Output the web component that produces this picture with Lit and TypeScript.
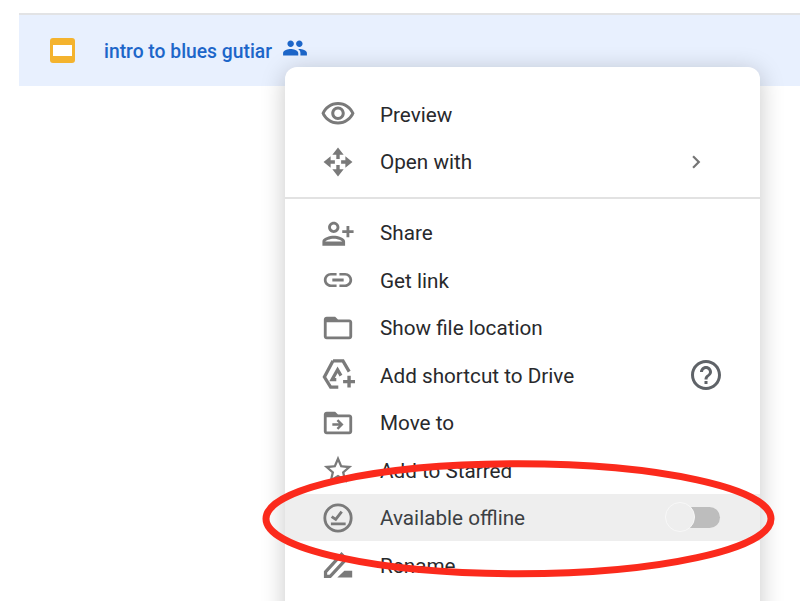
import { LitElement, html, css, svg } from "lit";
import { customElement } from "lit/decorators.js";

const P = (d: string) => svg`<path d=${d}></path>`;
const icons: Record<string, unknown> = {
  eye: svg`<g transform="translate(12 11.5) scale(1.06) translate(-12 -11.5)"><path d="M12 6c3.79 0 7.17 2.13 8.82 5.5C19.17 14.87 15.79 17 12 17s-7.17-2.13-8.82-5.5C4.83 8.13 8.21 6 12 6m0-2C7 4 2.73 7.11 1 11.5 2.73 15.89 7 19 12 19s9.27-3.11 11-7.5C21.27 7.11 17 4 12 4zm0 5c1.38 0 2.5 1.12 2.5 2.5S13.38 14 12 14s-2.5-1.12-2.5-2.5S10.62 9 12 9m0-2c-2.48 0-4.5 2.02-4.5 4.5S9.52 16 12 16s4.5-2.02 4.5-4.5S14.48 7 12 7z"></path></g>`,
  move: P("M12 1.800L8 6.800h2.800v3h2.400v-3H16zM1.800 12l5 4v-2.800h3v-2.400h-3V8zM22.200 12l-5-4v2.800h-3v2.400h3V16zM12 22.200l4-5h-2.800v-3h-2.400v3H8z"),
  share: svg`<g transform="translate(24 0) scale(-1 1)"><path d="M15 12c2.21 0 4-1.79 4-4s-1.79-4-4-4-4 1.79-4 4 1.79 4 4 4zm0-6c1.1 0 2 .9 2 2s-.9 2-2 2-2-.9-2-2 .9-2 2-2zm0 8c-2.67 0-8 1.34-8 4v3h16v-3c0-2.66-5.33-4-8-4zm-6 4c.22-.72 3.31-2 6-2 2.7 0 5.8 1.29 6 2H9zm-3-3v-3h3v-2H6V7H4v3H1v2h3v3h2z"></path></g>`,
  link: P("M3.900 12c0-1.710 1.390-3.100 3.100-3.100h4V7H7c-2.760 0-5 2.240-5 5s2.240 5 5 5h4v-1.900H7c-1.710 0-3.100-1.390-3.100-3.100zM8 13h8v-2H8v2zm9-6h-4v1.900h4c1.710 0 3.100 1.390 3.100 3.100s-1.390 3.100-3.100 3.100h-4V17h4c2.760 0 5-2.240 5-5s-2.240-5-5-5z"),
  folder: P("M20 6h-8l-2-2H4c-1.100 0-1.990.9-1.990 2L2 18c0 1.100.9 2 2 2h16c1.100 0 2-.9 2-2V8c0-1.100-.9-2-2-2zm0 12H4V8h16v10z"),
  shortcut: svg`<path class="line thick" d="M8.500 2h7l4.400 7.600M8.500 2L2.400 13.400 6.800 20.500h5.400M10.800 15.300H7.800l3.900-7 2.400 4.100"></path><path d="M18.600 12.500h2.400v3h3v2.400h-3v3h-2.400v-3h-3v-2.400h3z"></path>`,
  moveto: P("M20 6h-8l-2-2H4c-1.100 0-1.990.9-1.990 2L2 18c0 1.100.9 2 2 2h16c1.100 0 2-.9 2-2V8c0-1.100-.9-2-2-2zm0 12H4V8h16v10zm-7.800-1.300l3.700-3.700-3.700-3.700-1.200 1.200 1.600 1.600H8v1.800h4.600L11 15.500z"),
  star: P("M22 9.240l-7.190-.62L12 2 9.190 8.630 2 9.240l5.460 4.730L5.820 21 12 17.270 18.180 21l-1.630-7.030L22 9.240zM12 15.400l-3.760 2.270 1-4.280-3.320-2.880 4.380-.38L12 6.100l1.710 4.040 4.380.38-3.320 2.880 1 4.280L12 15.400z"),
  offline: svg`<circle class="line" cx="12" cy="12" r="9.300"></circle><path class="line" d="M7.500 11l2.900 2 4.200-5.500M7 16.200h10.400"></path>`,
  rename: svg`<path class="line thick" d="M3.200 20v-3.200L14.500 4.500l3.300 3.300L6.500 20z"></path><path d="M11.500 20.800L16.500 16H22v4.800z"></path>`,
};
const help = "M11 18h2v-2h-2v2zm1-16C6.480 2 2 6.480 2 12s4.480 10 10 10 10-4.480 10-10S17.520 2 12 2zm0 18c-4.410 0-8-3.590-8-8s3.590-8 8-8 8 3.590 8 8-3.590 8-8 8zm0-14c-2.210 0-4 1.790-4 4h2c0-1.100.9-2 2-2s2 .9 2 2c0 2-3 1.750-3 5h2c0-2.250 3-2.500 3-5 0-2.210-1.790-4-4-4z";
const people = "M16 11c1.660 0 2.990-1.340 2.990-3S17.660 5 16 5c-1.660 0-3 1.340-3 3s1.340 3 3 3zm-8 0c1.660 0 2.990-1.340 2.990-3S9.660 5 8 5C6.340 5 5 6.340 5 8s1.340 3 3 3zm0 2c-2.330 0-7 1.170-7 3.500V19h14v-2.500c0-2.330-4.670-3.500-7-3.500zm8 0c-.29 0-.62.02-.97.05 1.160.84 1.970 1.970 1.970 3.450V19h6v-2.500c0-2.330-4.670-3.500-7-3.500z";

type Item = { icon: string; label: string; kind?: "chevron" | "help" | "toggle" };
const first: Item[] = [
  { icon: "eye", label: "Preview" },
  { icon: "move", label: "Open with", kind: "chevron" },
];
const second: Item[] = [
  { icon: "share", label: "Share" },
  { icon: "link", label: "Get link" },
  { icon: "folder", label: "Show file location" },
  { icon: "shortcut", label: "Add shortcut to Drive", kind: "help" },
  { icon: "moveto", label: "Move to" },
  { icon: "star", label: "Add to Starred" },
  { icon: "offline", label: "Available offline", kind: "toggle" },
  { icon: "rename", label: "Rename" },
];

@customElement("app-root")
export class AppRoot extends LitElement {
  static styles = css`
    :host {
      display: block;
      position: relative;
      width: 800px;
      height: 601px;
      overflow: hidden;
      background: #fff;
      padding-top: 13px;
      box-sizing: border-box;
      font-family: Roboto, "Liberation Sans", sans-serif;
    }
    .row {
      margin-left: 19px;
      height: 71px;
      border-top: 2px solid #e2e3e5;
      background: #e8f0fe;
      display: flex;
      align-items: center;
      padding: 0 0 0 31px;
      color: #1d66c9;
      box-sizing: content-box;
    }
    .slides {
      width: 25px;
      height: 25px;
      border-radius: 3px;
      background: #f4b32e;
      display: flex;
      align-items: center;
      justify-content: center;
      margin-right: 29px;
    }
    .slides i {
      display: block;
      width: 19px;
      height: 11px;
      background: #fff;
    }
    .title {
      font-size: 19.3px;
      font-weight: 500;
      margin-right: 10px;
      padding-top: 2px;
    }
    .people {
      width: 26px;
      height: 26px;
      fill: #1d66c9;
      margin-bottom: 5px;
    }
    .menu {
      position: absolute;
      left: 285px;
      top: 67px;
      width: 475px;
      height: 600px;
      background: #fff;
      border-radius: 12px 12px 0 0;
      box-shadow: 0 4px 24px rgba(0, 0, 0, 0.22);
      padding-top: 23.25px;
      box-sizing: border-box;
    }
    .item {
      height: 47.5px;
      display: flex;
      align-items: center;
      padding-left: 36px;
      padding-right: 40px;
      font-size: 20.7px;
      color: #28292c;
    }
    .item.active {
      background: #eeeeee;
      color: #3c4043;
    }
    .icon {
      width: 34px;
      height: 34px;
      fill: #7a7a7a;
      flex: none;
      margin-right: 25px;
    }
    .icon .line {
      fill: none;
      stroke: #7a7a7a;
      stroke-width: 2;
    }
    .icon .line.thick {
      stroke-width: 2.3;
    }
    .label {
      flex: 1;
      padding-top: 1px;
    }
    .sep {
      height: 2px;
      background: #e2e2e2;
      margin: 11.5px 0 10px;
    }
    .chevron {
      width: 26px;
      height: 26px;
      fill: #757575;
      margin-right: 11px;
    }
    .help {
      width: 36px;
      height: 36px;
      fill: #5f6368;
      margin-right: -4px;
    }
    .toggle {
      position: relative;
      width: 40px;
      height: 21px;
      border-radius: 11px;
      background: #bdbdbd;
    }
    .thumb {
      position: absolute;
      left: -15px;
      top: -5px;
      width: 28px;
      height: 28px;
      border-radius: 50%;
      background: #eeeeee;
      border: 1px solid #f8f8f8;
    }
    .ring {
      position: absolute;
      left: 0;
      top: 0;
      width: 800px;
      height: 601px;
      pointer-events: none;
    }
    .ring ellipse {
      fill: none;
      stroke: #fb2a1c;
      stroke-width: 7;
    }
  `;

  private renderItem(it: Item) {
    return html`<div class="item ${it.kind === "toggle" ? "active" : ""}">
      <svg class="icon" viewBox="0 0 24 24">${icons[it.icon]}</svg>
      <span class="label">${it.label}</span>
      ${it.kind === "chevron"
        ? html`<svg class="chevron" viewBox="0 0 24 24"><path d="M10 6L8.590 7.410 13.170 12l-4.580 4.590L10 18l6-6z"></path></svg>`
        : ""}
      ${it.kind === "help"
        ? html`<svg class="help" viewBox="0 0 24 24"><path d=${help}></path></svg>`
        : ""}
      ${it.kind === "toggle"
        ? html`<div class="toggle"><div class="thumb"></div></div>`
        : ""}
    </div>`;
  }

  render() {
    return html`
      <div class="row">
        <div class="slides"><i></i></div>
        <span class="title">intro to blues gutiar</span>
        <svg class="people" viewBox="0 0 24 24"><path d=${people}></path></svg>
      </div>
      <div class="menu">
        ${first.map((i) => this.renderItem(i))}
        <div class="sep"></div>
        ${second.map((i) => this.renderItem(i))}
      </div>
      <svg class="ring" viewBox="0 0 800 601">
        <ellipse cx="518.5" cy="518.8" rx="252.5" ry="55"></ellipse>
      </svg>
    `;
  }
}
